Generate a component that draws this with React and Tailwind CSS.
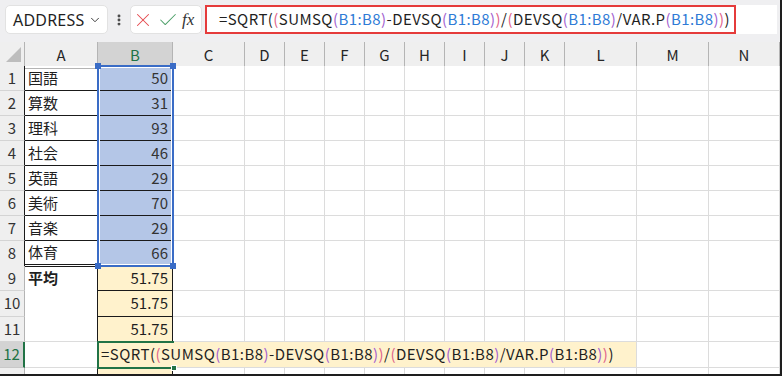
import React from 'react';
import { ChevronDown, X, Check, EllipsisVertical } from 'lucide-react';

const gridCols =
  'grid grid-cols-[25px_73px_75px_72px_40px_40px_40px_40px_40px_40px_40px_40px_72px_72px_71px]';
const colNames = ['A', 'B', 'C', 'D', 'E', 'F', 'G', 'H', 'I', 'J', 'K', 'L', 'M', 'N'];

const subjects = [
  ['国語', '50'],
  ['算数', '31'],
  ['理科', '93'],
  ['社会', '46'],
  ['英語', '29'],
  ['美術', '70'],
  ['音楽', '29'],
  ['体育', '66'],
];

const BLK = 'text-[#1f1f1f]';
const PINK = 'text-[#e0628a]';
const PURP = 'text-[#a35fd0]';
const BLUE = 'text-[#2f7bd6]';

// formula tokens: [text, level]  level: 0 plain, 1 pink paren, 2 purple paren, 3 ref
const tokens = [
  ['=SQRT(', 0],
  ['(', 1],
  ['SUMSQ', 0],
  ['(', 2],
  ['B1:B8', 3],
  [')', 2],
  ['-DEVSQ', 0],
  ['(', 2],
  ['B1:B8', 3],
  [')', 2],
  [')', 1],
  ['/', 0],
  ['(', 1],
  ['DEVSQ', 0],
  ['(', 2],
  ['B1:B8', 3],
  [')', 2],
  ['/VAR.P', 0],
  ['(', 2],
  ['B1:B8', 3],
  [')', 2],
  [')', 1],
  [')', 0],
];

function Formula({ refColor }) {
  return tokens.map(([t, lv], i) => (
    <span key={i} className={lv === 1 ? PINK : lv === 2 ? PURP : lv === 3 ? refColor : BLK}>
      {t}
    </span>
  ));
}

function Toolbar() {
  return (
    <div className="flex h-[42px] items-start bg-[#efeff1] pt-[5px]">
      <div className="ml-[5px] flex h-[29px] w-[103px] items-center justify-between rounded-[5px] border border-[#e2e2e2] bg-white pl-[7px] pr-[5px]">
        <span className="font-['Noto_Sans',sans-serif] text-[16px] tracking-[0.2px] text-[#1f1f1f]">ADDRESS</span>
        <ChevronDown size={14} strokeWidth={1.6} className="text-[#333]" />
      </div>
      <div className="flex h-[29px] w-[22px] items-center justify-center">
        <EllipsisVertical size={14} strokeWidth={3} className="text-[#444]" />
      </div>
      <div className="flex h-[29px] w-[72px] items-center gap-[3px] rounded-[5px] border border-[#e2e2e2] bg-white pl-[1px]">
        <X size={22} strokeWidth={1.1} className="text-[#e5484d]" />
        <Check size={22} strokeWidth={1.1} className="text-[#4c9f68]" />
        <span className="font-['Liberation_Serif',serif] text-[17px] italic text-[#333]">fx</span>
      </div>
      <div className="ml-[3px] flex h-[29px] w-[572px] items-center bg-white">
        <div className="flex h-[29px] w-[531px] items-center border-2 border-[#e53b3b] pl-[12px] font-['Noto_Sans_CJK_JP',sans-serif] text-[15px] tracking-[0.42px] whitespace-nowrap">
          <Formula refColor={BLUE} />
        </div>
      </div>
    </div>
  );
}

function HeaderRow() {
  return (
    <div className={`${gridCols} h-[24px] bg-[#efefef] font-['Noto_Sans_CJK_JP',sans-serif] text-[15px]`}>
      <div className="relative border-b border-r border-[#b4b4b4]">
        <svg width="25" height="24" className="absolute left-0 top-0">
          <polygon points="6,20 21,20 21,5" fill="#bdbdbd" />
        </svg>
      </div>
      {colNames.map((c) =>
        c === 'B' ? (
          <div key={c} className="flex items-center justify-center border-b-2 border-r border-b-[#217346] border-r-[#b4b4b4] bg-[#d3d3d3] pt-[2px] text-[#217346]">
            {c}
          </div>
        ) : (
          <div key={c} className="flex items-center justify-center border-b border-r border-[#b4b4b4] text-[#262626]">
            {c}
          </div>
        )
      )}
    </div>
  );
}

function RowHead({ n, active, dark }) {
  if (active) {
    return (
      <div className="flex items-center justify-center border-b border-r-2 border-b-[#c8c8c8] border-r-[#217346] bg-[#d3d3d3] text-[#217346]">
        {n}
      </div>
    );
  }
  return (
    <div className={`flex items-center justify-center border-b border-r border-b-[#d4d4d4] bg-[#efefef] text-[#333] ${dark ? 'border-r-[#1a1a1a]' : 'border-r-[#b4b4b4]'}`}>
      {n}
    </div>
  );
}

function Blank({ n }) {
  return Array.from({ length: n }).map((_, i) => (
    <div key={i} className="border-b border-r border-[#dcdcdc] bg-white" />
  ));
}

function Sheet() {
  return (
    <div className="relative font-['Noto_Sans_CJK_JP',sans-serif] text-[15px]">
      {subjects.map(([a, b], i) => (
        <div key={i} className={`${gridCols} h-[25px]`}>
          <RowHead n={i + 1} dark />
          <div className={`flex items-center pl-[3px] text-[#1f1f1f] border-r border-r-[#1a1a1a] ${i === 7 ? 'border-b-[3px] border-double border-b-[#1a1a1a]' : 'border-b border-b-[#1a1a1a]'}`}>
            {a}
          </div>
          <div className="flex items-center justify-end border-b border-r border-[#1a1a1a] bg-[#b4c6e7] pr-[4px] text-[#333]">
            {b}
          </div>
          <Blank n={12} />
        </div>
      ))}
      {[9, 10, 11].map((n) => (
        <div key={n} className={`${gridCols} ${n === 10 ? 'h-[26px]' : 'h-[25px]'}`}>
          <RowHead n={n} />
          <div className={`flex items-center border-r border-r-[#1a1a1a] pl-[3px] font-bold text-[#1f1f1f] ${n === 11 ? 'border-b border-b-[#dcdcdc]' : ''}`}>
            {n === 9 ? '平均' : ''}
          </div>
          <div className="flex items-center justify-end border-b border-r border-[#1a1a1a] bg-[#fff2cc] pr-[4px] text-[#1f1f1f]">
            51.75
          </div>
          <Blank n={12} />
        </div>
      ))}
      <div className={`${gridCols} h-[26px]`}>
        <RowHead n={12} active />
        <div className="border-b border-r border-b-[#dcdcdc] border-r-[#1a1a1a]" />
        <div className="flex items-center border-b border-[#1a1a1a] bg-[#fff2cc] pl-[3px]">
          <span className="relative z-30 whitespace-nowrap tracking-[0.45px]">
            <Formula refColor={BLK} />
          </span>
        </div>
        <div className="col-span-10 border-b border-r border-b-[#dcdcdc] border-r-[#dcdcdc] bg-[#fff2cc]" />
        <Blank n={2} />
      </div>
      <div className={`${gridCols} h-[8px]`}>
        <div className="border-r border-[#b4b4b4] bg-[#efefef]" />
        <div className="border-r border-[#1a1a1a]" />
        <div className="border-r border-[#1a1a1a] bg-[#fff2cc]" />
        {Array.from({ length: 12 }).map((_, i) => (
          <div key={i} className="border-r border-[#dcdcdc]" />
        ))}
      </div>

      {/* reference highlight B1:B8 */}
      <div className="pointer-events-none absolute left-[97px] top-[-1px] h-[202px] w-[77px] border-2 border-[#3a6cc6] shadow-[inset_0_0_0_1px_#fff]">
        <div className="absolute -left-[4px] -top-[4px] h-[6px] w-[6px] bg-[#3a6cc6]" />
        <div className="absolute -right-[4px] -top-[4px] h-[6px] w-[6px] bg-[#3a6cc6]" />
        <div className="absolute -bottom-[4px] -left-[4px] h-[6px] w-[6px] bg-[#3a6cc6]" />
        <div className="absolute -bottom-[4px] -right-[4px] h-[6px] w-[6px] bg-[#3a6cc6]" />
      </div>
      {/* active cell B12 */}
      <div className="pointer-events-none absolute left-[97px] top-[275px] z-20 h-[28px] w-[77px] border-2 border-r-0 border-[#217346]">
        <div className="absolute -bottom-[4px] -right-[3px] h-[6px] w-[6px] border border-white bg-[#217346]" />
      </div>
    </div>
  );
}

export default function App() {
  return (
    <div className="h-[376px] w-[782px] overflow-hidden border-b-2 border-r-2 border-[#1e1e1e] bg-white">
      <Toolbar />
      <HeaderRow />
      <Sheet />
    </div>
  );
}
